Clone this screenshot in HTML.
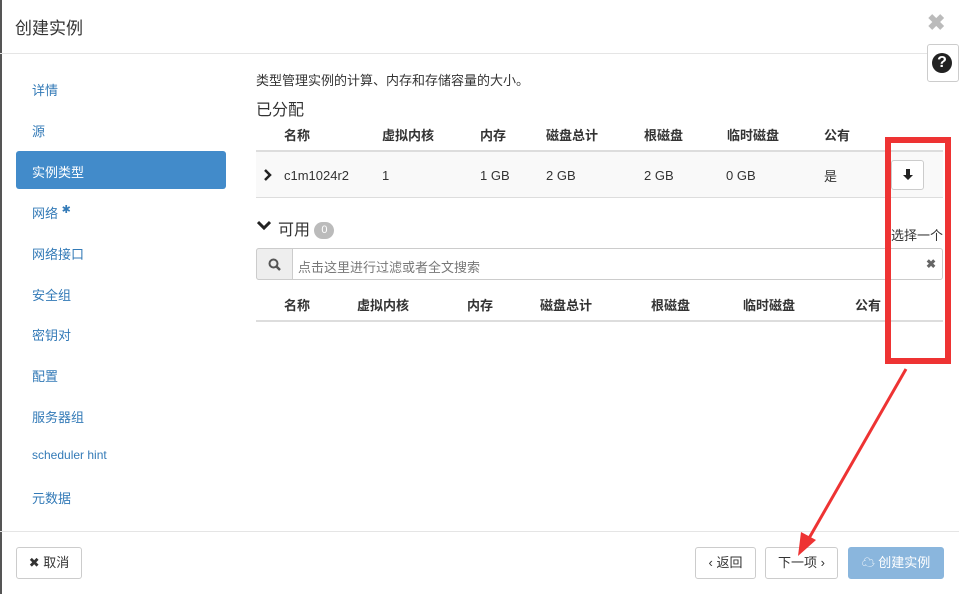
<!DOCTYPE html>
<html><head><meta charset="utf-8"><style>
*{box-sizing:border-box;margin:0;padding:0}
body{width:959px;height:594px;overflow:hidden;background:#fff;font-family:"Liberation Sans","Noto Sans CJK SC",sans-serif;color:#333;position:relative;font-size:13px}
.a{position:absolute;white-space:nowrap}
.nav{color:#337ab7;font-size:13px;left:32px}
.th{font-weight:bold;font-size:13px;color:#333}
.btn{position:absolute;border:1px solid #ccc;border-radius:3px;background:#fff;height:32px;line-height:30px;text-align:center;font-size:13px;color:#333}
</style></head><body>
<div class="a" style="left:0;top:0;width:2px;height:594px;background:#555"></div>
<div class="a" style="left:15px;top:14px;font-size:17px;color:#333">创建实例</div>
<div class="a" style="left:927px;top:10px;font-size:22px;color:#bbb;font-weight:bold">✖</div>
<div class="a" style="left:0;top:53px;width:959px;height:1px;background:#e5e5e5"></div>
<div class="a" style="left:927px;top:44px;width:32px;height:38px;border:1px solid #ccc;border-radius:3px;background:#fff"></div>
<div class="a" style="left:932px;top:53px;width:20px;height:20px;border-radius:50%;background:#222;color:#fff;font-weight:bold;font-size:16px;line-height:20px;text-align:center">?</div>

<div class="a nav" style="top:80px">详情</div>
<div class="a nav" style="top:121px">源</div>
<div class="a" style="left:16px;top:151px;width:210px;height:38px;background:#428bca;border-radius:3px"></div>
<div class="a" style="left:32px;top:162px;color:#fff">实例类型</div>
<div class="a nav" style="top:203px">网络 <span style="font-size:11px;vertical-align:top">✱</span></div>
<div class="a nav" style="top:244px">网络接口</div>
<div class="a nav" style="top:285px">安全组</div>
<div class="a nav" style="top:325px">密钥对</div>
<div class="a nav" style="top:366px">配置</div>
<div class="a nav" style="top:407px">服务器组</div>
<div class="a nav" style="top:448px;font-size:12px">scheduler hint</div>
<div class="a nav" style="top:488px">元数据</div>

<div class="a" style="left:256px;top:70px;font-size:13px">类型管理实例的计算、内存和存储容量的大小。</div>
<div class="a" style="left:256px;top:96px;font-size:16px">已分配</div>
<div class="a th" style="left:284px;top:125px">名称</div>
<div class="a th" style="left:382px;top:125px">虚拟内核</div>
<div class="a th" style="left:480px;top:125px">内存</div>
<div class="a th" style="left:546px;top:125px">磁盘总计</div>
<div class="a th" style="left:644px;top:125px">根磁盘</div>
<div class="a th" style="left:727px;top:125px">临时磁盘</div>
<div class="a th" style="left:824px;top:125px">公有</div>
<div class="a" style="left:256px;top:150px;width:687px;height:48px;background:#f9f9f9;border-top:2px solid #ddd;border-bottom:1px solid #ddd"></div>
<svg class="a" style="left:263px;top:169px" width="10" height="12"><path d="M2 1 L7 6 L2 11" fill="none" stroke="#222" stroke-width="2.5"/></svg>
<div class="a" style="left:284px;top:168px">c1m1024r2</div>
<div class="a" style="left:382px;top:168px">1</div>
<div class="a" style="left:480px;top:168px">1 GB</div>
<div class="a" style="left:546px;top:168px">2 GB</div>
<div class="a" style="left:644px;top:168px">2 GB</div>
<div class="a" style="left:726px;top:168px">0 GB</div>
<div class="a" style="left:824px;top:166px">是</div>
<div class="btn" style="left:891px;top:160px;width:33px;height:30px"></div>
<svg class="a" style="left:902px;top:169px" width="12" height="12"><path d="M4 0 H8 V6 H11 L6 11 L1 6 H4 Z" fill="#222"/></svg>

<svg class="a" style="left:257px;top:220px" width="14" height="12"><path d="M1 2 L7 8 L13 2" fill="none" stroke="#222" stroke-width="3"/></svg>
<div class="a" style="left:278px;top:216px;font-size:16px">可用 <span style="display:inline-block;background:#bbb;color:#fff;border-radius:9px;width:20px;height:17px;line-height:17px;text-align:center;font-size:11px;vertical-align:middle">0</span></div>
<div class="a" style="left:891px;top:225px;font-size:13px">选择一个</div>
<div class="a" style="left:256px;top:248px;width:687px;height:32px;border:1px solid #ccc;border-radius:3px"></div>
<div class="a" style="left:256px;top:248px;width:37px;height:32px;background:#eee;border:1px solid #ccc;border-radius:3px 0 0 3px"></div>
<svg class="a" style="left:268px;top:258px" width="14" height="14"><circle cx="5.5" cy="5.5" r="4" fill="none" stroke="#555" stroke-width="2"/><path d="M8.5 8.5 L12 12" stroke="#555" stroke-width="2.5"/></svg>
<div class="a" style="left:298px;top:257px;color:#777">点击这里进行过滤或者全文搜索</div>
<div class="a" style="left:926px;top:257px;color:#666;font-weight:bold;font-size:12px">✖</div>
<div class="a th" style="left:284px;top:295px">名称</div>
<div class="a th" style="left:357px;top:295px">虚拟内核</div>
<div class="a th" style="left:467px;top:295px">内存</div>
<div class="a th" style="left:540px;top:295px">磁盘总计</div>
<div class="a th" style="left:651px;top:295px">根磁盘</div>
<div class="a th" style="left:743px;top:295px">临时磁盘</div>
<div class="a th" style="left:855px;top:295px">公有</div>
<div class="a" style="left:256px;top:320px;width:687px;height:2px;background:#ddd"></div>

<div class="a" style="left:0;top:531px;width:959px;height:1px;background:#e5e5e5"></div>
<div class="btn" style="left:16px;top:547px;width:66px">✖ 取消</div>
<div class="btn" style="left:695px;top:547px;width:61px">‹ 返回</div>
<div class="btn" style="left:765px;top:547px;width:73px">下一项 ›</div>
<div class="btn" style="left:848px;top:547px;width:96px;background:#8ab6dd;border-color:#8ab6dd;color:#fff">☁ 创建实例</div>

<svg class="a" style="left:0;top:0" width="959" height="594">
<rect x="888" y="140" width="60" height="221" fill="none" stroke="#ee3333" stroke-width="6"/>
<line x1="906" y1="369" x2="808" y2="540" stroke="#ee3333" stroke-width="3"/>
<polygon points="798,556 801,532 816,540" fill="#ee3333"/>
</svg>
</body></html>
